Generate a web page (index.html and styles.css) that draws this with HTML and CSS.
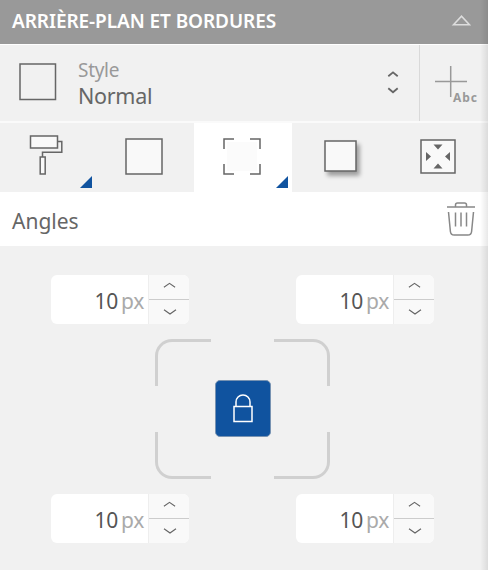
FILE: index.html
```html
<!DOCTYPE html>
<html lang="fr">
<head>
<meta charset="utf-8">
<title>Arrière-plan et bordures</title>
<link rel="stylesheet" href="styles.css">
</head>
<body>
<main class="inspector">
  <header class="header">
    <h1 class="title">ARRIÈRE-PLAN ET BORDURES</h1>
    <svg class="collapse" width="20" height="12" viewBox="0 0 20 12"><path d="M2.500 9.700 10.500 1.200l8 8.500z"/></svg>
  </header>

  <section class="style-row">
    <svg class="style-icon" width="38" height="38" viewBox="0 0 38 38"><rect x="1" y="1" width="35.500" height="35.500"/></svg>
    <div class="style-text">
      <span class="style-label">Style</span>
      <span class="style-value">Normal</span>
    </div>
    <svg class="updown" width="12" height="24" viewBox="0 0 12 24"><path d="M1.300 5.200 6 1.400l4.700 3.800M1.300 17.300l4.700 4 4.700-4"/></svg>
    <div class="add-style">
      <svg width="46" height="40" viewBox="0 0 46 40"><path d="M1 16.500h32M16.700 1v31"/><text x="19" y="36.700" textLength="24">Abc</text></svg>
    </div>
  </section>

  <nav class="tabs">
    <button class="tab" aria-label="Fond">
      <svg class="roller" width="34" height="41" viewBox="0 0 34 41"><path class="fill" d="M1.500 2h27v12h-27z"/><path d="M28.500 7.500h4.300v10.800H13.500V23"/><path class="fill" d="M11.200 23h5v17h-5z"/></svg>
      <i class="marker"></i>
    </button>
    <button class="tab" aria-label="Bordure">
      <svg class="border-icon plain" width="38" height="37" viewBox="0 0 38 37"><path class="fill" d="M1 1h36v35H1z"/></svg>
    </button>
    <button class="tab active" aria-label="Angles">
      <svg class="border-icon" width="38" height="37" viewBox="0 0 38 37"><path class="soft" d="M4 4h30v29H4z"/><path d="M1 11V1h10M27 1h10v10M37 26v10H27M11 36H1V26"/></svg>
      <i class="marker"></i>
    </button>
    <button class="tab" aria-label="Ombre">
      <svg class="shadow-icon" width="33" height="32" viewBox="0 0 33 32"><path class="fill" d="M1 1h31v30H1z"/></svg>
    </button>
    <button class="tab" aria-label="Marges">
      <svg class="inset-icon" width="36" height="35" viewBox="0 0 36 35"><path class="fill" d="M1 1h34v33H1z"/><path class="arrow" d="M13.500 5.500h9L18 10.500zM13.500 29.500h9L18 24.500zM6 13v9l5-4.500zM30 13v9l-5-4.500z"/></svg>
    </button>
  </nav>

  <section class="section-title">
    <h2>Angles</h2>
    <svg width="30" height="36" viewBox="0 0 30 36"><path d="M1 6h28M9.500 5.500V4q0-2 2-2h7q2 0 2 2v1.500M2.500 11l1.900 19.500q.3 3.500 3.800 3.500h13.600q3.500 0 3.800-3.500L27.500 11M9.500 11.500v14M15 11.500v14M20.500 11.500v14"/></svg>
  </section>

  <section class="corners">
    <div class="spinner-row">
      <div class="spinner"><div class="value">10<span>px</span></div><div class="steps"><svg viewBox="0 0 14 6"><path d="M1 5.200 7 1l6 4.200"/></svg><svg viewBox="0 0 14 6"><path d="M1 .8 7 5 13 .8"/></svg></div></div>
      <div class="spinner"><div class="value">10<span>px</span></div><div class="steps"><svg viewBox="0 0 14 6"><path d="M1 5.200 7 1l6 4.200"/></svg><svg viewBox="0 0 14 6"><path d="M1 .8 7 5 13 .8"/></svg></div></div>
    </div>
    <div class="frame">
      <i class="corner tl"></i><i class="corner tr"></i>
      <i class="corner bl"></i><i class="corner br"></i>
      <button class="lock" aria-label="Lier">
        <svg width="22" height="30" viewBox="0 0 22 30"><path d="M2 13.500h18v15H2zM4 13.500V9a7 7 0 0 1 14 0v4.500"/></svg>
      </button>
    </div>
    <div class="spinner-row">
      <div class="spinner"><div class="value">10<span>px</span></div><div class="steps"><svg viewBox="0 0 14 6"><path d="M1 5.200 7 1l6 4.200"/></svg><svg viewBox="0 0 14 6"><path d="M1 .8 7 5 13 .8"/></svg></div></div>
      <div class="spinner"><div class="value">10<span>px</span></div><div class="steps"><svg viewBox="0 0 14 6"><path d="M1 5.200 7 1l6 4.200"/></svg><svg viewBox="0 0 14 6"><path d="M1 .8 7 5 13 .8"/></svg></div></div>
    </div>
  </section>
</main>
</body>
</html>
```
FILE: styles.css
```css
* { box-sizing: border-box; }
body {
  margin: 0;
  background: #f1f1f1;
  font-family: "Noto Sans", "Open Sans", sans-serif;
  color: #666;
}
svg { display: block; flex: none; fill: none; stroke: #666; stroke-width: 1.5; }
button { border: 0; padding: 0; background: none; font: inherit; }
h1, h2 { margin: 0; }

.inspector { position: relative; width: 488px; height: 570px; overflow: hidden; }
.inspector::after {
  content: "";
  position: absolute;
  inset: 0 0 0 auto;
  width: 8px;
  background: linear-gradient(to right, rgba(0,0,0,0), rgba(0,0,0,.09));
  pointer-events: none;
}

.header {
  display: flex;
  align-items: center;
  justify-content: space-between;
  height: 44px;
  padding: 0 17px 3px 12px;
  background: #999;
}
.title { color: #fff; font-size: 19px; line-height: 28px; font-weight: 600; letter-spacing: -.08px; white-space: nowrap; }
.collapse { stroke: #ddd; stroke-width: 1.6; }

.style-row {
  display: flex;
  height: 79px;
  border-top: 1px solid #fff;
  border-bottom: 2px solid #fafafa;
}
.style-icon { margin: 18px 0 0 19px; }
.style-text { display: flex; flex-direction: column; flex: 1; margin: 13px 0 0 21px; line-height: 25px; }
.style-label { color: #999; font-size: 19px; letter-spacing: -.3px; }
.style-value { font-size: 21.5px; letter-spacing: -.3px; }
.updown { margin: 26px 20px 0 0; stroke-width: 1.800; }
.add-style { width: 69px; height: 76px; padding: 20px 0 0 14px; border-left: 1px solid #d9d9d9; }
.add-style svg { stroke: #999; stroke-width: 1.500; }
.add-style text { fill: #999; stroke: none; font-size: 12px; font-weight: 700; }

.tabs { display: grid; grid-template-columns: 97px 97px 98px 98px 98px; height: 69px; }
.tab { position: relative; }
.active { background: #fff; }
.fill { fill: #f9f9f9; }
.soft { fill: #fbfbfb; stroke: none; }
.arrow { fill: #666; stroke: none; }
.marker {
  position: absolute;
  right: 5px;
  bottom: 4px;
  width: 12px;
  height: 12px;
  background: #10539f;
  clip-path: polygon(100% 0, 100% 100%, 0 100%);
}
.active .marker { right: 4px; }
.tab .roller { margin: -6px 0 0 29px; }
.tab .border-icon { margin: -3px 0 0 29px; }
.tab .plain { margin-left: 28px; }
.tab .shadow-icon { margin: -3px 0 0 32px; filter: drop-shadow(3px 4px 2px rgba(0,0,0,.35)); }
.tab .inset-icon { margin: -3px 0 0 30px; }

.section-title {
  display: flex;
  align-items: center;
  justify-content: space-between;
  height: 54px;
  padding: 0 12px;
  background: #fff;
}
.section-title h2 { font-size: 21px; font-weight: 400; line-height: 30px; margin-top: 3px; }
.section-title svg { stroke: #888; }

.corners { padding: 29px 54px 0 51px; }
.spinner-row { display: flex; gap: 107px; }
.spinner { display: flex; width: 138px; height: 49px; border-radius: 6px; overflow: hidden; background: #fff; }
.value { width: 97px; padding-right: 4px; text-align: right; font-size: 21px; line-height: 52px; color: #555; letter-spacing: -.3px; }
.value span { margin-left: 3px; color: #aaa; }
.steps { flex: 1; display: grid; grid-template-rows: 1fr 1fr; border-left: 1px solid #eee; background: #f9f9f9; }
.steps svg { width: 14px; height: 6px; align-self: center; justify-self: center; stroke-width: 1.200; margin-right: -1px; }
.steps svg:first-child { width: 100%; height: 100%; margin: 0; padding: 0 13px 3px 14px; border-bottom: 1px solid #ccc; }

.frame {
  position: relative;
  display: grid;
  grid-template-columns: 56px 56px;
  grid-template-rows: 47px 47px;
  justify-content: space-between;
  align-content: space-between;
  width: 175px;
  height: 140px;
  margin: 15px 0 15px 104px;
}
.corner { border: 0 solid #d0d0d0; }
.tl { border-width: 3px 0 0 3px; border-top-left-radius: 17px; }
.tr { border-width: 3px 3px 0 0; border-top-right-radius: 17px; }
.bl { border-width: 0 0 3px 3px; border-bottom-left-radius: 17px; }
.br { border-width: 0 3px 3px 0; border-bottom-right-radius: 17px; }
.lock {
  position: absolute;
  left: 60px;
  top: 41px;
  width: 56px;
  height: 57px;
  border-radius: 5px;
  border: 1px solid #7893b2;
  background: #10539f;
}
.lock svg { margin: -2px auto 0; stroke: #fff; }
```
